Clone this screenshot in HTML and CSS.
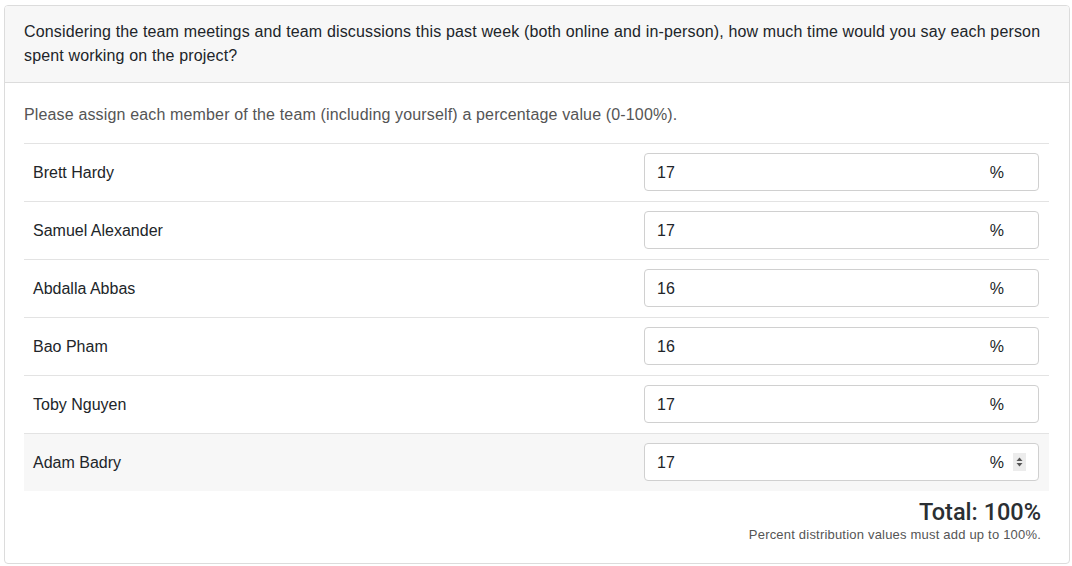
FILE: index.html
```html
<!DOCTYPE html>
<html>
<head>
<meta charset="utf-8">
<link rel="stylesheet" href="styles.css">
</head>
<body>
<div class="card">
  <div class="card-header">Considering the team meetings and team discussions this past week (both online and in-person), how much time would you say each person spent working on the project?</div>
  <div class="card-body">
    <p class="lead-text">Please assign each member of the team (including yourself) a percentage value (0-100%).</p>
    <table class="dist-table">
      <tbody>
        <tr><td class="name">Brett Hardy</td><td class="val"><div class="pct-input"><span class="num">17</span><span class="unit">%</span><span class="spin"></span></div></td></tr>
        <tr><td class="name">Samuel Alexander</td><td class="val"><div class="pct-input"><span class="num">17</span><span class="unit">%</span><span class="spin"></span></div></td></tr>
        <tr><td class="name">Abdalla Abbas</td><td class="val"><div class="pct-input"><span class="num">16</span><span class="unit">%</span><span class="spin"></span></div></td></tr>
        <tr><td class="name">Bao Pham</td><td class="val"><div class="pct-input"><span class="num">16</span><span class="unit">%</span><span class="spin"></span></div></td></tr>
        <tr><td class="name">Toby Nguyen</td><td class="val"><div class="pct-input"><span class="num">17</span><span class="unit">%</span><span class="spin"></span></div></td></tr>
        <tr class="hover"><td class="name">Adam Badry</td><td class="val"><div class="pct-input"><span class="num">17</span><span class="unit">%</span><span class="spin visible"><svg width="13" height="18" viewBox="0 0 13 18"><path d="M6.5 4.5 L9.5 8 L3.5 8 Z" fill="#555"/><path d="M6.5 13.5 L9.5 10 L3.5 10 Z" fill="#555"/></svg></span></div></td></tr>
      </tbody>
    </table>
    <div class="total-block">
      <div class="total">Total: 100%</div>
      <div class="hint">Percent distribution values must add up to 100%.</div>
    </div>
  </div>
</div>
</body>
</html>
```

FILE: styles.css
```css
html, body {
  margin: 0;
  padding: 0;
  background: #fff;
}
body {
  padding: 5px 2px 2px 4px;
  font-family: "Liberation Sans", Arial, sans-serif;
  color: #212529;
  font-size: 16px;
  line-height: 24px;
}
.card {
  width: 1066px;
  box-sizing: border-box;
  border: 1px solid #dcdcdc;
  border-radius: 4px;
  overflow: hidden;
}
.card-header {
  background: #f7f7f7;
  border-bottom: 1px solid #dcdcdc;
  padding: 14px 19px 14px 19px;
  letter-spacing: 0.15px;
}
.card-body {
  padding: 20px 20px 19px 19px;
}
.lead-text {
  margin: 0 0 16px 0;
  color: #555;
  letter-spacing: 0.15px;
}
.dist-table {
  width: 1025px;
  border-collapse: collapse;
}
.dist-table td {
  border-top: 1px solid #e3e3e3;
  padding: 9px 10px 10px 9px;
  vertical-align: middle;
}
.dist-table td.name {
  padding-top: 10px;
  padding-bottom: 9px;
}
.dist-table td.val {
  width: 395px;
  padding-left: 10px;
}
.dist-table tr.hover td {
  background: #f7f7f7;
}
.pct-input {
  height: 38px;
  box-sizing: border-box;
  border: 1px solid #d0d0d0;
  border-radius: 4px;
  background: #fff;
  display: flex;
  align-items: center;
  padding: 1px 12px 0 12px;
}
.num {
  flex: 1;
}
.unit {
  margin-right: 9px;
}
.spin {
  width: 13px;
  height: 18px;
  display: block;
  margin-top: -1px;
}
.spin.visible {
  background: #ececec;
}
.spin svg {
  display: block;
}
.total-block {
  text-align: right;
  padding: 7px 8px 0 0;
}
.total {
  font-family: Roboto, "Liberation Sans", sans-serif;
  font-size: 23.5px;
  line-height: 28px;
  font-weight: 500;
  color: #2b2f33;
}
.hint {
  font-size: 13px;
  line-height: 18px;
  color: #555;
  letter-spacing: 0.2px;
}
```
